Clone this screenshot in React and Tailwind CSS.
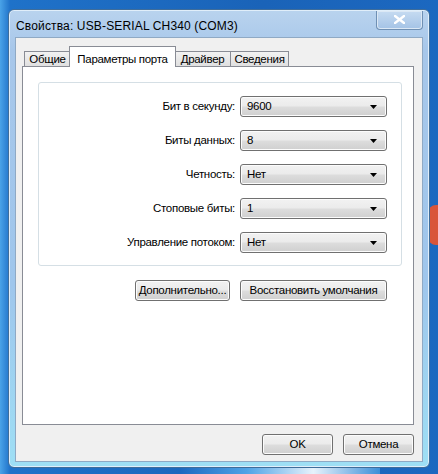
import React from 'react';

const rows = [
    {label: 'Бит в секунду:', value: '9600'},
    {label: 'Биты данных:', value: '8'},
    {label: 'Четность:', value: 'Нет'},
    {label: 'Стоповые биты:', value: '1'},
    {label: 'Управление потоком:', value: 'Нет'},
];

const tabs = [
    {t: 'Общие', cls: 'w-[47px]'},
    {t: 'Параметры порта', cls: 'w-[107px]'},
    {t: 'Драйвер', cls: 'w-[57px]'},
    {t: 'Сведения', cls: 'w-[59px] -ml-px'},
];

const btn = "h-[21px] border border-[#707070] rounded-[3px] bg-[linear-gradient(#f2f2f2_0%,#ebebeb_48%,#dddddd_52%,#cfcfcf_100%)] shadow-[inset_0_0_0_1px_#fcfcfc] text-[11.5px] tracking-[-0.3px] leading-none text-black flex items-center justify-center whitespace-nowrap";

const Combo = ({value}) => (
    <div className={btn + " w-[147px] !justify-between pl-[6px] pr-[9px]"}>
        <span>{value}</span>
        <svg width="7" height="4" viewBox="0 0 7 4"><path d="M0 0h7L3.5 4z" fill="#000"/></svg>
    </div>
);

const App = () => {
    return (
        <div className="relative w-[438px] h-[474px] overflow-hidden bg-[linear-gradient(90deg,#4aa3e8_0px,#1f72c9_10px,#1a63b8_60%,#1c68c0_100%)] pt-[9px] pl-[8px]"
             style={{fontFamily: '"Liberation Sans", Arial, sans-serif'}}>
            {/* bit of the desktop logo peeking out on the right */}
            <div className="absolute left-[428px] top-[205px] w-[14px] h-[40px] bg-[#d9553a] rounded-l-[8px]"/>
            <div className="absolute left-[180px] top-[462px] w-[200px] h-[14px] bg-[linear-gradient(90deg,#1c68c0,#4fa3e6,#e7f2fb,#3d8fd8)]"/>
            <div className="relative w-[422px] h-[459px] rounded-[6px] border border-[#3f6d9a] bg-[linear-gradient(#b9d3ee_0px,#a7c7ea_40px,#9fc6ec_60%,#9edff5_100%)] shadow-[inset_0_0_0_1px_#e0eefa] flex flex-col">
                <div className="h-[27px] flex items-center justify-between pl-[7px] pr-[6px]">
                    <span className="text-[12px] tracking-[0.15px] text-black pt-[4px]">Свойства: USB-SERIAL CH340 (COM3)</span>
                    <div className="w-[47px] h-[19px] mt-[-7px] rounded-b-[4px] border border-[#6f90b4] border-t-0 bg-[linear-gradient(#c6dbf1,#a4c3e6)] shadow-[inset_0_0_0_1px_#dbe8f5] flex items-center justify-center">
                        <svg width="11" height="9" viewBox="0 0 11 9">
                            <path d="M1 1l9 7M10 1L1 8" stroke="#fff" strokeWidth="2.4" strokeLinecap="square"/>
                        </svg>
                    </div>
                </div>
                <div className="mx-[6px] mb-[5px] flex-1 bg-[#f0f0f0] border border-[#8fa9c4] flex flex-col text-[11.5px] tracking-[-0.3px]">
                    <div className="pt-[7px] pl-[6px] pr-[8px] flex flex-col">
                        <div className="flex items-end pl-[2px] h-[21px]">
                            {tabs.map((tab, i) => i === 1 ? (
                                <div key={tab.t} className={tab.cls + " h-[21px] -mb-px z-10 -mx-[2px] bg-white border border-b-0 border-[#898c95] flex justify-center pt-[4px]"}>{tab.t}</div>
                            ) : (
                                <div key={tab.t} className={tab.cls + " h-[15px] bg-[linear-gradient(#f2f2f2,#e0e0e0)] border border-b-0 border-[#898c95] flex items-center justify-center pt-[2px]"}>{tab.t}</div>
                            ))}
                        </div>
                        <div className="h-[359px] bg-white border border-[#898c95] pt-[15px] pl-[15px]">
                            <div className="w-[364px] h-[184px] border border-[#d5dfe5] rounded-[3px] pt-[13px] flex flex-col gap-[13px]">
                                {rows.map(r => (
                                    <div key={r.label} className="flex items-center justify-end pr-[14px] gap-[5px]">
                                        <span className="text-black">{r.label}</span>
                                        <Combo value={r.value}/>
                                    </div>
                                ))}
                            </div>
                            <div className="w-[364px] flex justify-end gap-[10px] pr-[15px] mt-[14px]">
                                <div className={btn + " w-[95px] h-[20px]"}>Дополнительно...</div>
                                <div className={btn + " w-[147px] h-[20px]"}>Восстановить умолчания</div>
                            </div>
                        </div>
                    </div>
                    <div className="flex justify-end gap-[10px] pr-[8px] mt-[9px]">
                        <div className={btn + " w-[71px]"}>OK</div>
                        <div className={btn + " w-[71px]"}>Отмена</div>
                    </div>
                </div>
            </div>
        </div>
    );
};

export default App;
